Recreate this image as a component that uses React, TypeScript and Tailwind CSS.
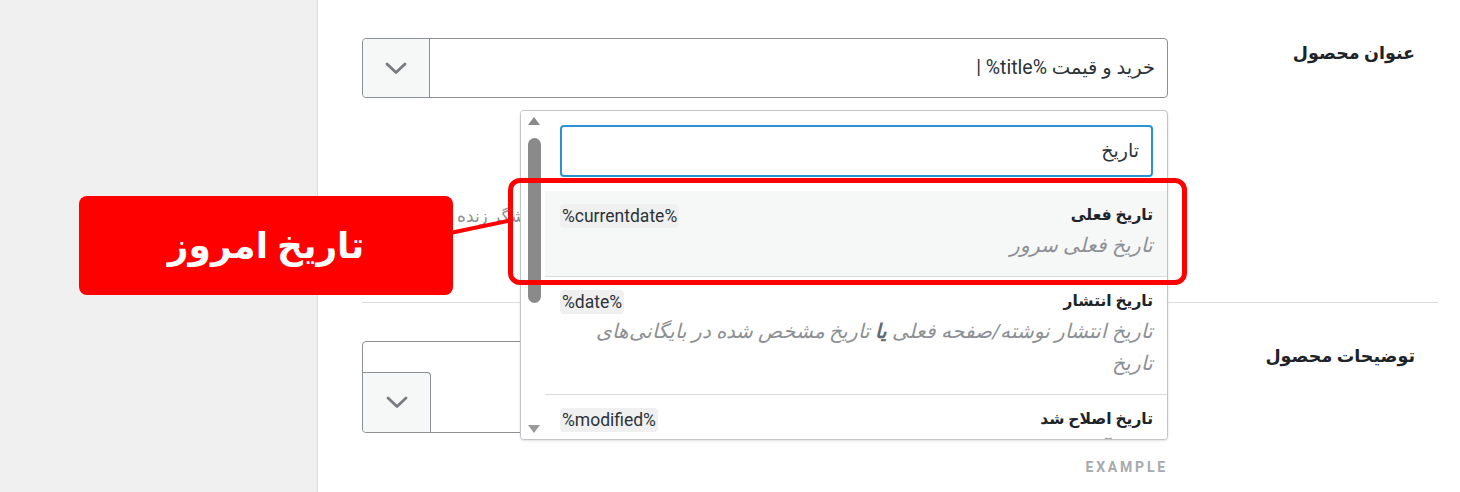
const items = [
  { title: "تاریخ فعلی", tag: "%currentdate%", desc: <>تاریخ فعلی سرور</>, active: true },
  {
    title: "تاریخ انتشار",
    tag: "%date%",
    desc: (
      <>
        تاریخ انتشار نوشته/صفحه فعلی <b className="font-bold text-[#646970]">یا</b> تاریخ مشخص شده در بایگانی‌های تاریخ
      </>
    ),
  },
  { title: "تاریخ اصلاح شد", tag: "%modified%", desc: <>تاریخ آخرین ویرایش نوشته/صفحه فعلی</> },
];

function Chevron() {
  return (
    <svg width="22" height="13" viewBox="0 0 22 13" fill="none">
      <polyline points="2,2 11,10.5 20,2" stroke="#787c82" strokeWidth="2.8" strokeLinecap="round" strokeLinejoin="round" />
    </svg>
  );
}

function Dropdown() {
  return (
    <div className="absolute right-0 top-[72px] z-10 flex h-[330px] w-[648px] overflow-hidden rounded-[4px] border border-[#c3c4c7] bg-white shadow-sm">
      <div className="flex min-w-0 flex-1 flex-col">
        <div className="px-[14px] pl-[15px] py-[14px]">
          <div className="flex h-[52px] items-center rounded-[4px] border-2 border-[#2a93d5] px-[12px] text-[19px] text-[#2c3338]">
            تاریخ
          </div>
        </div>
        {items.map((it) => (
          <div
            key={it.tag}
            className={
              "shrink-0 border-b border-[#dcdcde] pt-[12px] pb-[15px] pr-[14px] pl-[15px] " +
              (it.active ? "bg-[#f6f7f7]" : "bg-white")
            }
          >
            <div className="flex h-[26px] items-center justify-between">
              <span className="text-[15.5px] font-bold text-[#1d2327]">{it.title}</span>
              <span dir="ltr" className="rounded-[4px] bg-[#f0f0f1] px-[2px] text-[17.5px] leading-[24px] text-[#2c3338]">
                {it.tag}
              </span>
            </div>
            <div className="pl-[24px] text-[20px] italic leading-[32px] text-[#8c8f94]">{it.desc}</div>
          </div>
        ))}
      </div>
      <div className="relative w-[24px] shrink-0 bg-white">
        <div className="absolute left-[7px] top-[6px] h-0 w-0 border-x-[6px] border-b-[8px] border-x-transparent border-b-[#8a8a8a]" />
        <div className="absolute left-[7px] top-[27px] h-[165px] w-[13px] rounded-full bg-[#8a8a8a]" />
        <div className="absolute bottom-[6px] left-[7px] h-0 w-0 border-x-[6px] border-t-[8px] border-x-transparent border-t-[#9a9a9a]" />
      </div>
    </div>
  );
}

export default function App() {
  return (
    <div className="relative flex h-[492px] w-[1460px] overflow-hidden bg-white font-[family-name:Roboto,'DejaVu_Sans',sans-serif]">
      <aside className="w-[318px] shrink-0 border-r border-[#dcdcde] bg-[#f0f0f1]" />
      <main dir="rtl" className="flex-1 pl-[44px] pr-[22px]">
        <div className="flex h-[303px] border-b border-[#dcdcde]">
          <div className="w-[270px] shrink-0 pr-[23px] pt-[40px] text-[17.5px] font-bold text-[#1d2327]">عنوان محصول</div>
          <div className="min-w-0 flex-1 pt-[38px]">
            <div className="relative">
              <div className="flex h-[60px] rounded-[4px] border border-[#8c8f94] bg-white">
                <div className="flex flex-1 items-center pr-[12px] text-[19.5px] text-[#2c3338]">خرید و قیمت %title% |</div>
                <div className="flex w-[67px] items-center justify-center rounded-l-[4px] border-r border-[#8c8f94] bg-[#f6f7f7]">
                  <Chevron />
                </div>
              </div>
              <Dropdown />
            </div>
            <p className="mt-[106px] whitespace-nowrap text-[17px] leading-[24px] text-[#8c8f94]">
              این عنوان در نتایج موتورهای جستجو و در نوار عنوان مرورگر نمایش داده می‌شود و در پیشنمایشگر زنده
            </p>
          </div>
        </div>
        <div className="flex">
          <div className="w-[270px] shrink-0 pr-[23px] pt-[40px] text-[17.5px] font-bold text-[#1d2327]">توضیحات محصول</div>
          <div className="min-w-0 flex-1 pt-[38px]">
            <div className="flex h-[92px] items-end rounded-[4px] border border-[#8c8f94] bg-white">
              <div className="flex-1" />
              <div className="flex h-[60px] w-[68px] items-center justify-center rounded-tr-[4px] rounded-bl-[4px] border-t border-r border-[#8c8f94] bg-[#f6f7f7]">
                <Chevron />
              </div>
            </div>
            <div className="mt-[26px] text-right text-[14px] font-bold leading-[16px] tracking-[0.2em] text-[#a7aaad]">
              EXAMPLE
            </div>
          </div>
        </div>
      </main>

      {/* annotation overlay */}
      <div className="absolute left-[508px] top-[178px] z-20 h-[107px] w-[679px] rounded-[12px] border-[5px] border-[#ff0000]" />
      <svg className="absolute left-0 top-0 z-20" width="1460" height="492">
        <line x1="450" y1="233" x2="512" y2="220" stroke="#ff0000" strokeWidth="4" />
      </svg>
      <div
        dir="rtl"
        className="absolute left-[79px] top-[196px] z-20 flex h-[99px] w-[374px] items-center justify-center rounded-[8px] bg-[#ff0000] text-[36px] font-bold text-white"
      >
        تاریخ امروز
      </div>
    </div>
  );
}
